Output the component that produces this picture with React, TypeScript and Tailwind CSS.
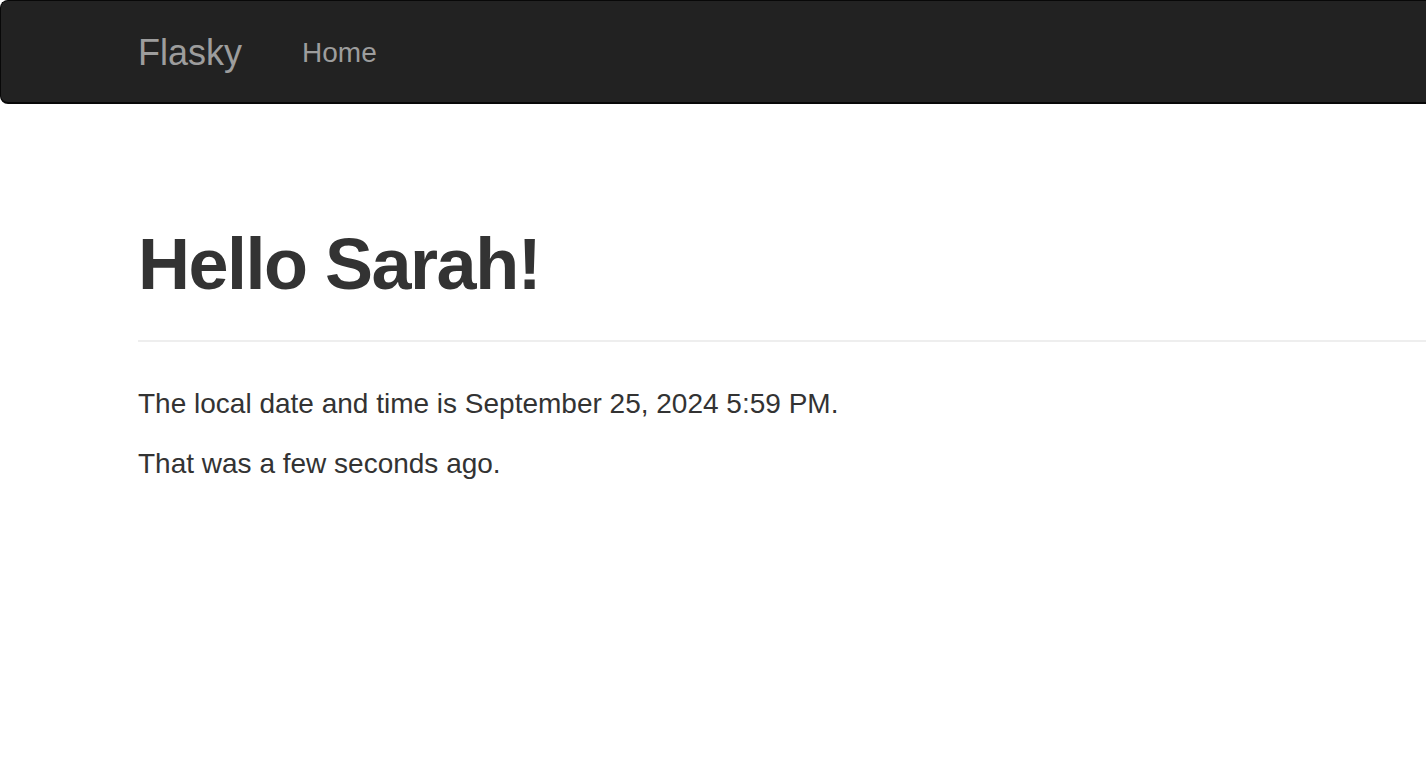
import React from "react";

export default function App() {
  return (
    <div className="min-h-screen overflow-hidden bg-white font-['Liberation_Sans',Arial,sans-serif] text-[#333]">
      <nav className="box-border flex h-[104px] items-start rounded-l-[8px] border-t border-b-2 border-l border-[#080808] bg-[#222] pl-[137px]">
        <a className="pt-[32px] pr-[30px] text-[36px] leading-[40px] text-[#9d9d9d]" href="#">
          Flasky
        </a>
        <a className="px-[30px] pt-[32px] text-[28px] leading-[40px] text-[#9d9d9d]" href="#">
          Home
        </a>
      </nav>

      <main className="pl-[138px]">
        <h1 className="mt-[121px] border-b-2 border-[#eee] pb-[36px] text-[72px] leading-[1.1] font-bold tracking-[-1.5px]">
          Hello Sarah!
        </h1>
        <p className="mt-[42px] mb-[20px] text-[28px] leading-[40px]">
          The local date and time is September 25, 2024 5:59 PM.
        </p>
        <p className="text-[28px] leading-[40px]">That was a few seconds ago.</p>
      </main>
    </div>
  );
}
